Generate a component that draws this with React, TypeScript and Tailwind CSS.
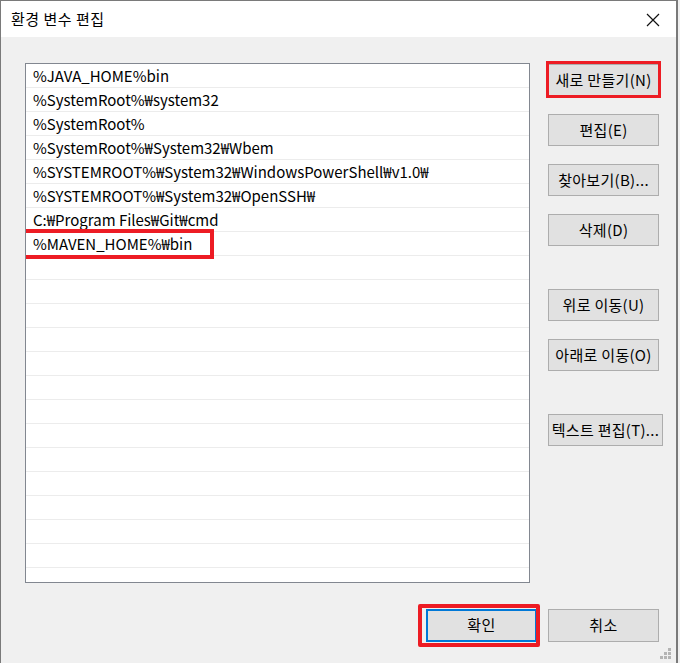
import React from 'react';

const paths = [
  '%JAVA_HOME%bin',
  '%SystemRoot%₩system32',
  '%SystemRoot%',
  '%SystemRoot%₩System32₩Wbem',
  '%SYSTEMROOT%₩System32₩WindowsPowerShell₩v1.0₩',
  '%SYSTEMROOT%₩System32₩OpenSSH₩',
  'C:₩Program Files₩Git₩cmd',
  '%MAVEN_HOME%₩bin',
];

const font = { fontFamily: '"Noto Sans CJK KR", "Noto Sans", sans-serif' };

const Btn = ({ label, wide, highlight, mt }: { label: string; wide?: boolean; highlight?: boolean; mt: string }) => (
  <div className={`relative ${mt}`}>
    <button
      className={`${wide ? 'w-[115px]' : 'w-[111px]'} h-[32px] bg-[#e1e1e1] border border-[#adadad] text-[15px] text-black tracking-[0.3px] whitespace-nowrap`}
    >
      {label}
    </button>
    {highlight && (
      <div className="absolute -left-[2px] -top-[3px] w-[115px] h-[37px] border-[3px] border-[#ed1c24] pointer-events-none" />
    )}
  </div>
);

const Grip = () => (
  <svg width="12" height="12" viewBox="0 0 12 12" className="absolute right-[4px] bottom-[3px]">
    {[
      [8, 0], [4, 4], [8, 4], [0, 8], [4, 8], [8, 8],
    ].map(([x, y], i) => (
      <rect key={i} x={x} y={y} width="3" height="3" fill="#b4b4b4" />
    ))}
  </svg>
);

export default function App() {
  return (
    <div className="w-[680px] h-[663px] bg-[#f0f0f0] overflow-hidden" style={font}>
      <div className="relative w-[678px] h-[663px] border-l border-t border-r-2 border-[#7a7a7a] bg-[#f0f0f0] flex flex-col">
        {/* title bar */}
        <div className="h-[36px] bg-white flex items-center justify-between pl-[10px] pr-[16px] shrink-0">
          <span className="text-[15px] text-black tracking-[0.5px]">환경 변수 편집</span>
          <svg width="14" height="14" viewBox="0 0 14 14" className="mt-[1px]">
            <path d="M1 1L13 13M13 1L1 13" stroke="#111" strokeWidth="1.2" />
          </svg>
        </div>

        <div className="flex pl-[24px] pt-[26px]">
          {/* list */}
          <div className="w-[505px] h-[520px] bg-white border border-[#828790] overflow-hidden">
            {Array.from({ length: 21 }).map((_, i) => (
              <div key={i} className="relative h-[24px] border-b border-[#ececec] pl-[7px] flex items-center pt-[2px]">
                <span className="text-[15px] text-black whitespace-nowrap tracking-[0px]">{paths[i] ?? ''}</span>
                {i === 7 && (
                  <div className="absolute -left-[5px] -top-[3px] w-[193px] h-[30px] border-[4px] border-[#ed1c24]" />
                )}
              </div>
            ))}
          </div>

          {/* side buttons */}
          <div className="flex flex-col ml-[18px]">
            <Btn label="새로 만들기(N)" highlight mt="mt-[1px]" />
            <Btn label="편집(E)" mt="mt-[18px]" />
            <Btn label="찾아보기(B)..." mt="mt-[18px]" />
            <Btn label="삭제(D)" mt="mt-[18px]" />
            <Btn label="위로 이동(U)" mt="mt-[43px]" />
            <Btn label="아래로 이동(O)" mt="mt-[18px]" />
            <Btn label="텍스트 편집(T)..." wide mt="mt-[43px]" />
          </div>
        </div>

        {/* bottom buttons */}
        <div className="flex justify-end gap-[11px] pr-[17px] mt-[26px]">
          <div className="relative">
            <button className="w-[111px] h-[33px] bg-[#e1e1e1] border-2 border-[#0078d7] text-[15px] text-black tracking-[0.5px]">
              확인
            </button>
            <div className="absolute -left-[8px] -top-[5px] w-[122px] h-[43px] border-[4px] border-[#ed1c24] rounded-[2px]" />
          </div>
          <button className="w-[111px] h-[33px] bg-[#e1e1e1] border border-[#adadad] text-[15px] text-black tracking-[0.5px]">
            취소
          </button>
        </div>
        <Grip />
      </div>
    </div>
  );
}
